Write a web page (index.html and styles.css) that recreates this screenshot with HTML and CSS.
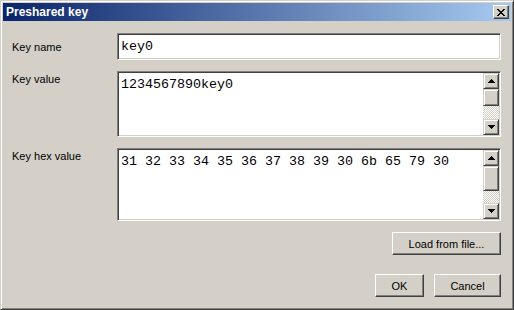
FILE: index.html
```html
<!DOCTYPE html>
<html lang="en">
<head>
    <meta charset="UTF-8">
    <title>Preshared key</title>
    <link rel="stylesheet" href="styles.css">
</head>
<body>
    <div class="window">
        <div class="titlebar">
            <span class="title">Preshared key</span>
            <div class="close-btn">
                <svg width="8" height="7" viewBox="0 0 8 7" shape-rendering="crispEdges">
                    <path d="M0 0h2v1H0zM6 0h2v1H6zM1 1h2v1H1zM5 1h2v1H5zM2 2h4v1H2zM3 3h2v1H3zM2 4h4v1H2zM1 5h2v1H1zM5 5h2v1H5zM0 6h2v1H0zM6 6h2v1H6z" fill="#000"/>
                </svg>
            </div>
        </div>

        <div class="content">
            <!-- key name -->
            <div class="row row-line">
                <div class="label">Key name</div>
                <div class="field field-line"><div class="field-text">key0</div></div>
            </div>

            <!-- key value -->
            <div class="row">
                <div class="label label-top">Key value</div>
                <div class="field field-area area-value">
                    <div class="field-text">1234567890key0</div>
                    <div class="scrollbar">
                        <div class="sb-btn"><svg width="7" height="4" viewBox="0 0 7 4" shape-rendering="crispEdges"><path d="M3 0h1v1H3zM2 1h3v1H2zM1 2h5v1H1zM0 3h7v1H0z" fill="#000"/></svg></div>
                        <div class="sb-thumb thumb-value"></div>
                        <div class="sb-track"></div>
                        <div class="sb-btn"><svg width="7" height="4" viewBox="0 0 7 4" shape-rendering="crispEdges"><path d="M0 0h7v1H0zM1 1h5v1H1zM2 2h3v1H2zM3 3h1v1H3z" fill="#000"/></svg></div>
                    </div>
                </div>
            </div>

            <!-- key hex value -->
            <div class="row">
                <div class="label label-top">Key hex value</div>
                <div class="field field-area area-hex">
                    <div class="field-text">31 32 33 34 35 36 37 38 39 30 6b 65 79 30</div>
                    <div class="scrollbar">
                        <div class="sb-btn"><svg width="7" height="4" viewBox="0 0 7 4" shape-rendering="crispEdges"><path d="M3 0h1v1H3zM2 1h3v1H2zM1 2h5v1H1zM0 3h7v1H0z" fill="#000"/></svg></div>
                        <div class="sb-thumb thumb-hex"></div>
                        <div class="sb-track"></div>
                        <div class="sb-btn"><svg width="7" height="4" viewBox="0 0 7 4" shape-rendering="crispEdges"><path d="M0 0h7v1H0zM1 1h5v1H1zM2 2h3v1H2zM3 3h1v1H3z" fill="#000"/></svg></div>
                    </div>
                </div>
            </div>

            <div class="load-row">
                <div class="btn btn-load">Load from file...</div>
            </div>

            <div class="actions">
                <div class="btn btn-ok">OK</div>
                <div class="btn btn-cancel">Cancel</div>
            </div>
        </div>
    </div>
</body>
</html>
```

FILE: styles.css
```css
body {
    margin: 0;
    background-color: #d4d0c8;
    font-family: Tahoma, 'Liberation Sans', Arial, sans-serif;
    font-size: 11px;
    color: #000;
}
.window {
    width: 514px;
    height: 310px;
    box-sizing: border-box;
    background-color: #d4d0c8;
    border: 1px solid;
    border-color: #d4d0c8 #404040 #404040 #d4d0c8;
    box-shadow: inset 1px 1px 0 #fff, inset -1px -1px 0 #808080;
    padding: 2px;
}
.titlebar {
    height: 18px;
    display: flex;
    align-items: center;
    justify-content: space-between;
    padding: 0 2px 0 2px;
    background: linear-gradient(to right, #0a246a, #a6caf0);
}
.title {
    color: #fff;
    font-weight: bold;
    font-size: 12px;
    padding-left: 1px;
}
.close-btn {
    width: 16px;
    height: 14px;
    box-sizing: border-box;
    display: flex;
    align-items: center;
    justify-content: center;
    background-color: #d4d0c8;
    border: 1px solid;
    border-color: #fff #404040 #404040 #fff;
    box-shadow: inset -1px -1px 0 #808080;
}
.close-btn svg {
    margin-left: -1px;
}
.content {
    display: flex;
    flex-direction: column;
    padding: 12px 10px 0 9px;
}
.row {
    display: flex;
    margin-bottom: 11px;
}
.row-line {
    align-items: center;
}
.label {
    width: 105px;
    flex-shrink: 0;
}
.label-top {
    padding-top: 2px;
}
.field {
    flex: 1;
    display: flex;
    box-sizing: border-box;
    background-color: #fff;
    border: 1px solid;
    border-color: #808080 #fff #fff #808080;
    box-shadow: inset 1px 1px 0 #404040, inset -1px -1px 0 #d4d0c8;
    padding: 1px;
}
.field-line {
    height: 27px;
}
.area-value {
    height: 66px;
}
.area-hex {
    height: 73px;
}
.field-text {
    flex: 1;
    font-family: 'Courier New', 'Liberation Mono', monospace;
    font-size: 13.33px;
    line-height: 15px;
    padding: 4px 2px 0 2px;
    white-space: pre;
}
.scrollbar {
    width: 16px;
    display: flex;
    flex-direction: column;
}
.sb-btn, .sb-thumb {
    box-sizing: border-box;
    background-color: #d4d0c8;
    border: 1px solid;
    border-color: #d4d0c8 #404040 #404040 #d4d0c8;
    box-shadow: inset 1px 1px 0 #fff, inset -1px -1px 0 #808080;
}
.sb-btn {
    height: 16px;
    display: flex;
    align-items: center;
    justify-content: center;
}
.thumb-value {
    height: 17px;
}
.thumb-hex {
    height: 25px;
}
.sb-track {
    flex: 1;
    background: repeating-conic-gradient(#fff 0 25%, #d4d0c8 0 50%) 0 0 / 2px 2px;
}
.load-row {
    display: flex;
    justify-content: flex-end;
    margin-bottom: 19px;
}
.actions {
    display: flex;
    justify-content: flex-end;
    gap: 10px;
}
.btn {
    height: 23px;
    box-sizing: border-box;
    display: flex;
    align-items: center;
    justify-content: center;
    background-color: #d4d0c8;
    border: 1px solid;
    border-color: #fff #404040 #404040 #fff;
    box-shadow: inset -1px -1px 0 #808080;
}
.btn-load {
    width: 109px;
}
.btn-ok {
    width: 49px;
}
.btn-cancel {
    width: 67px;
}
```
